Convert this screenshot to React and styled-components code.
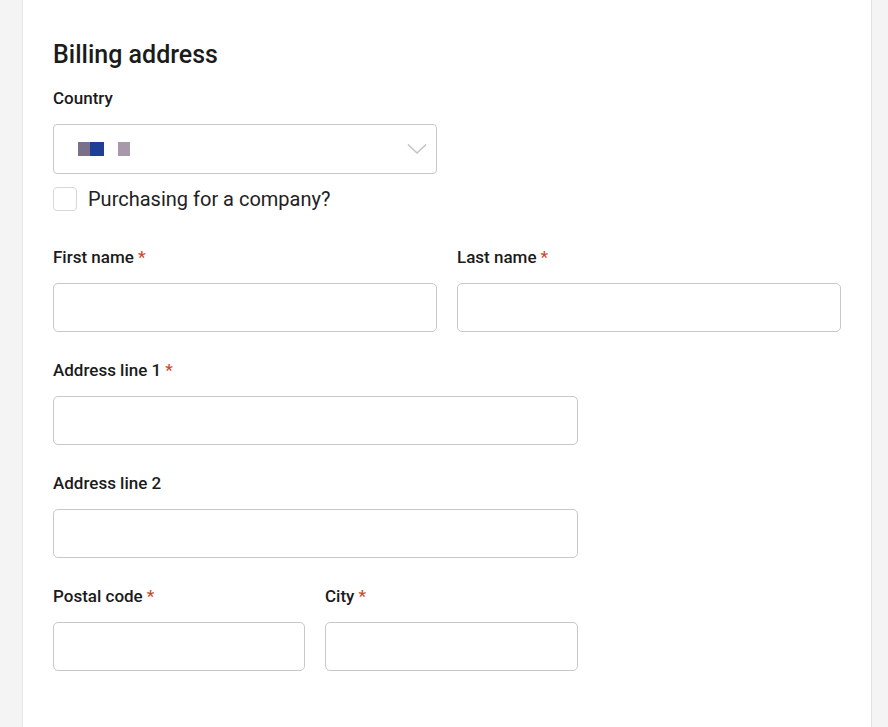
import React from 'react'
import styled, { createGlobalStyle } from 'styled-components'

const GlobalStyle = createGlobalStyle`
    html, body {
        margin: 0;
        padding: 0;
        background: #f4f4f4;
        font-family: Roboto, "Liberation Sans", sans-serif;
        color: #1b1b1b;
    }
`;

const Page = styled.div`
    min-height: 727px;
    padding: 0 16px 0 22px;
    box-sizing: border-box;
    display: flex;
`;

const Card = styled.section`
    width: 850px;
    min-height: 727px;
    box-sizing: border-box;
    background: #fff;
    border-left: 1px solid #e6e6e6;
    border-right: 1px solid #e2e2e2;
    padding: 39px 30px 40px 30px;
`;

const Title = styled.h2`
    margin: 0 0 15px 0;
    font-size: 25px;
    line-height: 32px;
    font-weight: 500;
    color: #1b1b1b;
`;

const Field = styled.div`
    display: flex;
    flex-direction: column;
    width: ${p => p.width || '100%'};
    margin-bottom: ${p => p.mb || '26px'};
`;

const Row = styled.div`
    display: flex;
    gap: 20px;
    width: ${p => p.width || '100%'};
`;

const Label = styled.label`
    font-size: 17px;
    line-height: 24px;
    font-weight: 500;
    color: #1b1b1b;
    margin-bottom: 14px;
`;

const Required = styled.span`
    color: #cc4a2c;
    margin-left: 4px;
`;

const Input = styled.input`
    height: 49px;
    box-sizing: border-box;
    border: 1px solid #c8c8c8;
    border-radius: 5px;
    padding: 0 16px;
    font-size: 16px;
    font-family: inherit;
    outline: none;
    width: 100%;
`;

const Select = styled.div`
    height: 50px;
    box-sizing: border-box;
    border: 1px solid #c8c8c8;
    border-radius: 4px;
    display: flex;
    align-items: center;
    justify-content: space-between;
    padding: 0 9px 0 24px;
`;

const Flag = styled.div`
    display: flex;
    align-items: center;
`;

const Swatch = styled.span`
    display: inline-block;
    width: ${p => p.w}px;
    height: 14px;
    background: ${p => p.color};
    margin-left: ${p => p.ml || 0}px;
`;

const CheckRow = styled.label`
    display: flex;
    align-items: center;
    gap: 11px;
    margin: 13px 0 34px 0;
    font-size: 20px;
    line-height: 24px;
    color: #222;
`;

const Box = styled.span`
    width: 24px;
    height: 24px;
    box-sizing: border-box;
    border: 1px solid #d8d8d8;
    border-radius: 4px;
    background: #fff;
`;

const Chevron = () => (
    <svg width="20" height="12" viewBox="0 0 20 12" fill="none">
        <path d="M1 1.5 L10 10 L19 1.5" stroke="#c4c4c4" strokeWidth="1.6" />
    </svg>
);

function TextField({ label, required, width, mb }) {
    return (
        <Field width={width} mb={mb}>
            <Label>
                {label}
                {required && <Required>*</Required>}
            </Label>
            <Input type="text" />
        </Field>
    );
}

export default function App() {
    return (
        <Page>
            <GlobalStyle />
            <Card>
                <Title>Billing address</Title>
                <Field width="384px" mb="0">
                    <Label>Country</Label>
                    <Select>
                        <Flag>
                            <Swatch w={12} color="#7b7089" />
                            <Swatch w={14} color="#1f3e96" />
                            <Swatch w={12} ml={14} color="#a898aa" />
                        </Flag>
                        <Chevron />
                    </Select>
                </Field>
                <CheckRow>
                    <Box />
                    Purchasing for a company?
                </CheckRow>
                <Row>
                    <TextField label="First name" required width="384px" />
                    <TextField label="Last name" required width="384px" />
                </Row>
                <TextField label="Address line 1" required width="525px" />
                <TextField label="Address line 2" width="525px" />
                <Row width="525px">
                    <TextField label="Postal code" required width="252px" />
                    <TextField label="City" required width="253px" />
                </Row>
            </Card>
        </Page>
    )
}
